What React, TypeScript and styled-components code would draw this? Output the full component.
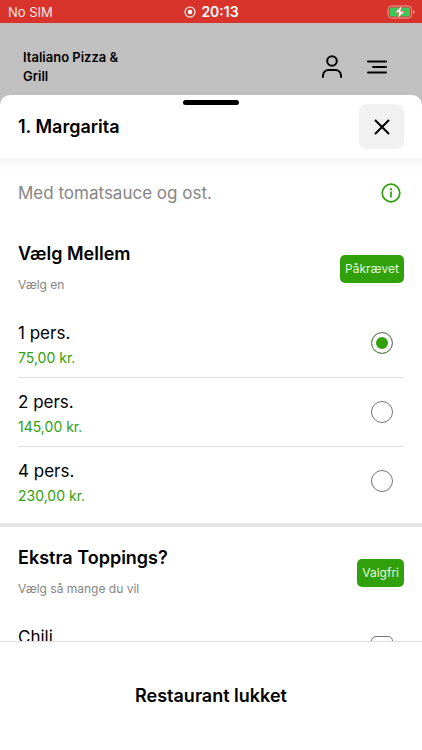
import React, { useState } from "react";
import styled, { createGlobalStyle } from "styled-components";

const GREEN = "#30a10a";

const GlobalStyle = createGlobalStyle`
  *, *::before, *::after { box-sizing: border-box; }
  body {
    margin: 0;
    background: #c0c0c0;
    color: #000;
    font-family: Inter, "Liberation Sans", sans-serif;
  }
  h1, h2, p { margin: 0; }
  button, input { font: inherit; }
`;

const Screen = styled.div`
  display: flex;
  flex-direction: column;
  height: 100vh;
  overflow: hidden;
`;

const StatusBar = styled.div`
  display: grid;
  grid-template-columns: 1fr auto 1fr;
  align-items: center;
  flex: none;
  height: 23px;
  padding: 0 7px 0 8px;
  background: #d9342c;
  color: #fff;
  font-size: 13px;
  line-height: 24px;
`;

const Carrier = styled.span`
  color: #ffe6e3;
`;

const Clock = styled.span`
  display: flex;
  align-items: center;
  gap: 5px;
  font-size: 14px;
  font-weight: 600;
`;

const Battery = styled.span`
  display: flex;
  justify-content: flex-end;
`;

const TopBar = styled.header`
  display: flex;
  align-items: center;
  justify-content: space-between;
  flex: none;
  height: 72px;
  padding: 16px 32px 0 23px;
`;

const Brand = styled.p`
  max-width: 120px;
  font-size: 13px;
  line-height: 19px;
  font-weight: 600;
`;

const TopActions = styled.nav`
  display: flex;
  gap: 19px;
`;

const IconButton = styled.button`
  display: flex;
  align-items: center;
  justify-content: center;
  padding: 0;
  border: 0;
  background: none;
  color: #000;
  cursor: pointer;
`;

const Sheet = styled.main`
  position: relative;
  display: flex;
  flex-direction: column;
  flex: 1;
  min-height: 0;
  border-radius: 10px 10px 0 0;
  background: #fff;
`;

const Grabber = styled.span`
  position: absolute;
  top: 5px;
  left: 50%;
  width: 56px;
  height: 5px;
  margin-left: -28px;
  border-radius: 3px;
  background: #000;
`;

const SheetHeader = styled.div`
  display: flex;
  align-items: center;
  justify-content: space-between;
  flex: none;
  height: 63px;
  padding: 0 18px;
`;

const SheetTitle = styled.h1`
  font-size: 18px;
  line-height: 24px;
  font-weight: 600;
`;

const CloseButton = styled(IconButton)`
  width: 45px;
  height: 45px;
  border-radius: 8px;
  background: #f1f1f1;
`;

const Content = styled.div`
  flex: 1;
  min-height: 0;
  overflow-y: auto;
  scrollbar-width: none;
  background: linear-gradient(#f3f3f3, #fff 12px);
`;

const Description = styled.div`
  display: flex;
  align-items: center;
  justify-content: space-between;
  padding: 23px 21px 18px 18px;
  color: #858585;
  font-size: 17px;
  line-height: 24px;
`;

const Section = styled.section<{ $divided?: boolean }>`
  border-top: ${(p) => (p.$divided ? "4px solid #e6e6e6" : "0")};
  padding: 0 18px 7px;
`;

const SectionHeader = styled.div`
  display: flex;
  align-items: center;
  justify-content: space-between;
  padding: 20px 0 13px;
`;

const SectionTitle = styled.h2`
  font-size: 18px;
  line-height: 22px;
  font-weight: 600;
`;

const Hint = styled.p`
  margin-top: 9px;
  color: #858585;
  font-size: 12px;
  line-height: 22px;
`;

const Badge = styled.span`
  margin-bottom: 1px;
  padding: 0 5px;
  border-radius: 5px;
  background: ${GREEN};
  color: #e4f8dc;
  font-size: 12px;
  line-height: 28px;
`;

const Option = styled.label`
  display: flex;
  align-items: center;
  justify-content: space-between;
  height: 69px;
  padding: 6px 11px 0 0;
  border-bottom: 1px solid #dedede;
  cursor: pointer;

  &:last-child { border-bottom-color: transparent; }
`;

const OptionText = styled.span`
  display: flex;
  flex-direction: column;
`;

const OptionName = styled.span`
  font-size: 17px;
  line-height: 24px;
`;

const Price = styled.span`
  color: ${GREEN};
  font-size: 14px;
  line-height: 26px;
`;

const Choice = styled.input`
  appearance: none;
  width: 22px;
  height: 22px;
  margin: 0 0 6px;
  border: 1px solid #77777b;
  border-radius: ${(p) => (p.type === "radio" ? "50%" : "5px")};
  background: #fff;

  &:checked {
    background: ${GREEN};
    box-shadow: inset 0 0 0 4px #fff;
  }
`;

const Footer = styled.footer`
  flex: none;
  border-top: 1px solid #dedede;
  background: #fff;
`;

const OrderButton = styled.button`
  display: block;
  width: 100%;
  height: 108px;
  padding: 0;
  border: 0;
  background: none;
  color: #000;
  font-size: 18px;
  line-height: 24px;
  font-weight: 600;
`;

const sizes = [
  { name: "1 pers.", price: "75,00 kr." },
  { name: "2 pers.", price: "145,00 kr." },
  { name: "4 pers.", price: "230,00 kr." },
];

const toppings = ["Chili"];

export default function App() {
  const [size, setSize] = useState(sizes[0].name);

  return (
    <Screen>
      <GlobalStyle />
      <StatusBar>
        <Carrier>No SIM</Carrier>
        <Clock>
          <svg width="12" height="12" viewBox="0 0 12 12" aria-hidden="true">
            <circle cx="6" cy="6" r="5" fill="none" stroke="#fff" strokeWidth="1.1" />
            <circle cx="6" cy="6" r="2.3" fill="#fff" />
          </svg>
          20:13
        </Clock>
        <Battery>
          <svg width="28" height="14" viewBox="0 0 28 14" aria-hidden="true">
            <rect x="1" y="1" width="23.5" height="12" rx="3.5" fill="none" stroke="#eda29c" />
            <rect x="2.6" y="2.6" width="20.4" height="8.8" rx="2" fill="#3cc759" />
            <path d="M26 5v4c1-.3 1.5-1 1.5-2S27 5.300 26 5z" fill="#eda29c" />
            <path d="M15 .5 7.800 7.700h4.200l-1.500 5.800 7.500-7.200h-4.300z" fill="#fff" stroke="#d9342c" strokeWidth=".5" />
          </svg>
        </Battery>
      </StatusBar>

      <TopBar>
        <Brand>Italiano Pizza &amp; Grill</Brand>
        <TopActions>
          <IconButton aria-label="Profil">
            <svg width="26" height="26" viewBox="0 0 26 26" fill="none" stroke="currentColor" strokeWidth="2" strokeLinecap="round">
              <circle cx="13" cy="7" r="4.8" />
              <path d="M4 23v-1.500a5.500 5.500 0 0 1 5.500-5.500h7a5.500 5.500 0 0 1 5.500 5.500V23" />
            </svg>
          </IconButton>
          <IconButton aria-label="Menu">
            <svg width="26" height="26" viewBox="0 0 26 26" fill="none" stroke="currentColor" strokeWidth="2" strokeLinecap="round">
              <path d="M4 7.500h18M9 13h13M4 18.500h18" />
            </svg>
          </IconButton>
        </TopActions>
      </TopBar>

      <Sheet>
        <Grabber />
        <SheetHeader>
          <SheetTitle>1. Margarita</SheetTitle>
          <CloseButton aria-label="Luk">
            <svg width="16" height="16" viewBox="0 0 16 16" fill="none" stroke="currentColor" strokeWidth="2" strokeLinecap="round">
              <path d="M1.500 1.500l13 13M14.500 1.500l-13 13" />
            </svg>
          </CloseButton>
        </SheetHeader>

        <Content>
          <Description>
            <p>Med tomatsauce og ost.</p>
            <IconButton aria-label="Information">
              <svg width="20" height="20" viewBox="0 0 20 20" fill="none" stroke={GREEN}>
                <circle cx="10" cy="10" r="8.800" strokeWidth="1.700" />
                <path d="M10 8.500v6" strokeWidth="1.700" />
                <path d="M10 5.200v2" strokeWidth="2" />
              </svg>
            </IconButton>
          </Description>

          <Section>
            <SectionHeader>
              <div>
                <SectionTitle>Vælg Mellem</SectionTitle>
                <Hint>Vælg en</Hint>
              </div>
              <Badge>Påkrævet</Badge>
            </SectionHeader>
            <div>
              {sizes.map((item) => (
                <Option key={item.name}>
                  <OptionText>
                    <OptionName>{item.name}</OptionName>
                    <Price>{item.price}</Price>
                  </OptionText>
                  <Choice
                    type="radio"
                    name="size"
                    checked={size === item.name}
                    onChange={() => setSize(item.name)}
                  />
                </Option>
              ))}
            </div>
          </Section>

          <Section $divided>
            <SectionHeader>
              <div>
                <SectionTitle>Ekstra Toppings?</SectionTitle>
                <Hint>Vælg så mange du vil</Hint>
              </div>
              <Badge>Valgfri</Badge>
            </SectionHeader>
            <div>
              {toppings.map((name) => (
                <Option key={name}>
                  <OptionText>
                    <OptionName>{name}</OptionName>
                    <Price aria-hidden="true">&nbsp;</Price>
                  </OptionText>
                  <Choice type="checkbox" name="topping" />
                </Option>
              ))}
            </div>
          </Section>
        </Content>

        <Footer>
          <OrderButton>Restaurant lukket</OrderButton>
        </Footer>
      </Sheet>
    </Screen>
  );
}
